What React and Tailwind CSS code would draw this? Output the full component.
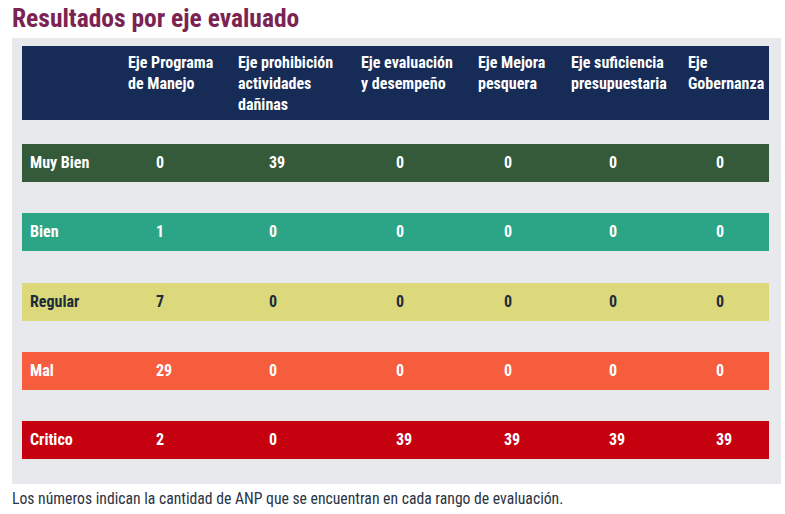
const font = { fontFamily: 'Roboto, "Open Sans", "Liberation Sans", sans-serif' };

const headers = [
  ["Eje Programa", "de Manejo"],
  ["Eje prohibición", "actividades", "dañinas"],
  ["Eje evaluación", "y desempeño"],
  ["Eje Mejora", "pesquera"],
  ["Eje suficiencia", "presupuestaria"],
  ["Eje", "Gobernanza"],
];

const rows = [
  { label: "Muy Bien", values: [0, 39, 0, 0, 0, 0], bg: "bg-[#355a3a]", text: "text-white" },
  { label: "Bien", values: [1, 0, 0, 0, 0, 0], bg: "bg-[#2ba585]", text: "text-white" },
  { label: "Regular", values: [7, 0, 0, 0, 0, 0], bg: "bg-[#dcd87c]", text: "text-[#1d2b3a]" },
  { label: "Mal", values: [29, 0, 0, 0, 0, 0], bg: "bg-[#f65d3c]", text: "text-white" },
  { label: "Critico", values: [2, 0, 39, 39, 39, 39], bg: "bg-[#c5000f]", text: "text-white" },
];

export default function App() {
  return (
    <div className="w-[785px] h-[514px] bg-white overflow-hidden font-stretch-condensed" style={font}>
      <h1 className="pl-[12px] pt-[2px] h-[38px] text-[25.5px] leading-[32px] font-bold text-[#7b2352]">
        Resultados por eje evaluado
      </h1>

      <div className="ml-[12px] w-[769px] bg-[#e8e9ed] pl-[10px] pr-[12px] pt-[8px] pb-[25px]">
        {/* header */}
        <div className="grid grid-cols-[106px_110px_123px_117px_93px_117px_1fr] h-[74px] bg-[#162b56] pt-[6px] text-white text-[16px] leading-[21px] font-bold">
          <div />
          {headers.map((lines, i) => (
            <div key={i}>
              {lines.map((l, j) => (
                <div key={j} className="whitespace-nowrap">{l}</div>
              ))}
            </div>
          ))}
        </div>

        {/* rows */}
        <div className="mt-[24px] flex flex-col gap-[31.3px]">
          {rows.map((row) => (
            <div
              key={row.label}
              className={`grid grid-cols-[134px_113px_127px_108px_105px_107px_1fr] h-[38px] items-center text-[16px] font-bold ${row.bg} ${row.text}`}
            >
              <div className="pl-[8px]">{row.label}</div>
              {row.values.map((v, i) => (
                <div key={i}>{v}</div>
              ))}
            </div>
          ))}
        </div>
      </div>

      <p className="pl-[12px] pt-[5px] text-[15.7px] leading-[20px] text-[#2a3344]">
        Los números indican la cantidad de ANP que se encuentran en cada rango de evaluación.
      </p>
    </div>
  );
}
